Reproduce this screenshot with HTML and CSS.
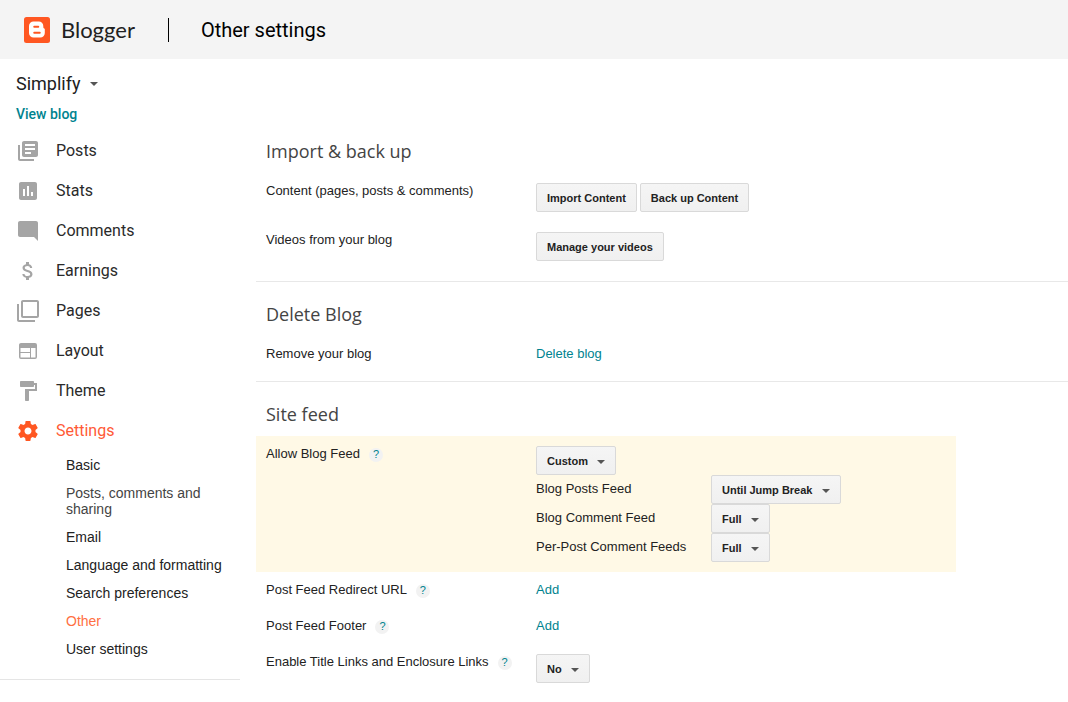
FILE: index.html
```html
<!DOCTYPE html>
<html lang="en">
<head>
<meta charset="utf-8">
<title>Blogger: Other settings</title>
<link rel="stylesheet" href="styles.css">
</head>
<body>
<header class="topbar">
  <a class="brand" href="#">
    <svg class="brand-mark" viewBox="0 0 26 26" aria-hidden="true">
      <rect width="26" height="26" rx="2.5" fill="#ff5722"/>
      <path fill="#fff" d="M9.500 4.500h5.300a4.500 4.500 0 0 1 4.500 4.500v1c0 .9.400 1.300.9 1.400.4.100.6.400.6.900v3.700a4.500 4.500 0 0 1-4.500 4.500H9.500A4.500 4.500 0 0 1 5 16V9a4.500 4.500 0 0 1 4.500-4.500z"/>
      <path d="M10.200 9.700h4.100M10.200 15.700h5.600" stroke="#ff5722" stroke-width="1.900" stroke-linecap="round"/>
    </svg>
    <span>Blogger</span>
  </a>
  <h1 class="page-title">Other settings</h1>
</header>
<div class="layout">
  <aside class="sidebar">
    <button class="blog-picker" type="button">Simplify<span class="caret"></span></button>
    <a class="view-blog" href="#">View blog</a>
    <nav>
      <ul class="nav">
        <li><a href="#"><svg viewBox="0 0 24 24"><path d="M4 6H2v14c0 1.100.9 2 2 2h14v-2H4V6zm16-4H8c-1.100 0-2 .9-2 2v12c0 1.100.9 2 2 2h12c1.100 0 2-.9 2-2V4c0-1.100-.9-2-2-2zm-1 9H9V9h10v2zm-4 4H9v-2h6v2zm4-8H9V5h10v2z"/></svg>Posts</a></li>
        <li><a href="#"><svg viewBox="0 0 24 24"><path d="M19 3H5c-1.100 0-2 .9-2 2v14c0 1.100.9 2 2 2h14c1.100 0 2-.9 2-2V5c0-1.100-.9-2-2-2zM9 17H7v-7h2v7zm4 0h-2V7h2v10zm4 0h-2v-4h2v4z"/></svg>Stats</a></li>
        <li><a href="#"><svg viewBox="0 0 24 24"><path d="M22 4c0-1.100-.9-2-2-2H4c-1.100 0-2 .9-2 2v12c0 1.100.9 2 2 2h14l4 4V4z"/></svg>Comments</a></li>
        <li><a href="#"><svg viewBox="0 0 24 24"><path d="M11.800 10.900c-2.270-.59-3-1.200-3-2.150 0-1.090 1.010-1.850 2.700-1.850 1.780 0 2.440.85 2.500 2.100h2.210c-.07-1.720-1.120-3.300-3.210-3.810V3h-3v2.160c-1.940.42-3.500 1.680-3.500 3.610 0 2.310 1.910 3.460 4.700 4.130 2.500.6 3 1.480 3 2.410 0 .69-.49 1.790-2.700 1.790-2.060 0-2.870-.92-2.980-2.100h-2.200c.12 2.190 1.760 3.420 3.680 3.830V21h3v-2.150c1.950-.37 3.500-1.500 3.500-3.550 0-2.840-2.430-3.810-4.700-4.400z"/></svg>Earnings</a></li>
        <li><a href="#"><svg viewBox="0 0 24 24"><path d="M3 5H1v16c0 1.100.9 2 2 2h16v-2H3V5zm18-4H7c-1.100 0-2 .9-2 2v14c0 1.100.9 2 2 2h14c1.100 0 2-.9 2-2V3c0-1.100-.9-2-2-2zm0 16H7V3h14v14z"/></svg>Pages</a></li>
        <li><a href="#"><svg viewBox="0 0 24 24"><path fill-rule="evenodd" d="M5 4h14a2 2 0 0 1 2 2v12a2 2 0 0 1-2 2H5a2 2 0 0 1-2-2V6c0-1.100.9-2 2-2zM4.500 9v4H14V9zM4.500 14v4.500H14V14zM15 9v9.500h4.500V9z"/></svg>Layout</a></li>
        <li><a href="#"><svg viewBox="0 0 24 24"><path d="M18 4V3c0-.55-.45-1-1-1H5c-.55 0-1 .45-1 1v4c0 .55.45 1 1 1h12c.55 0 1-.45 1-1V6h1v4H9v11c0 .55.45 1 1 1h2c.55 0 1-.45 1-1v-9h8V4h-3z"/></svg>Theme</a></li>
        <li><a class="active" href="#"><svg viewBox="0 0 24 24"><path d="M19.430 12.980c.04-.32.07-.64.07-.98s-.03-.66-.07-.98l2.110-1.650c.19-.15.24-.42.12-.64l-2-3.460c-.12-.22-.39-.3-.61-.22l-2.490 1c-.52-.4-1.080-.73-1.690-.98l-.38-2.650C14.460 2.180 14.250 2 14 2h-4c-.25 0-.46.18-.49.42l-.38 2.650c-.61.25-1.170.59-1.690.98l-2.490-1c-.23-.09-.49 0-.61.22l-2 3.460c-.13.22-.07.49.12.64l2.110 1.650c-.04.32-.07.65-.07.98s.03.66.07.98l-2.110 1.650c-.19.15-.24.42-.12.64l2 3.460c.12.22.39.3.61.22l2.490-1c.52.4 1.080.73 1.690.98l.38 2.650c.03.24.24.42.49.42h4c.25 0 .46-.18.49-.42l.38-2.650c.61-.25 1.170-.59 1.690-.98l2.490 1c.23.09.49 0 .61-.22l2-3.460c.12-.22.07-.49-.12-.64l-2.110-1.650zM12 15.500c-1.930 0-3.500-1.570-3.500-3.500s1.570-3.500 3.500-3.500 3.500 1.570 3.500 3.500-1.570 3.500-3.500 3.500z"/></svg>Settings</a></li>
      </ul>
      <ul class="subnav">
        <li><a href="#">Basic</a></li>
        <li><a class="muted" href="#">Posts, comments and sharing</a></li>
        <li><a href="#">Email</a></li>
        <li><a href="#">Language and formatting</a></li>
        <li><a href="#">Search preferences</a></li>
        <li><a class="active" href="#">Other</a></li>
        <li><a href="#">User settings</a></li>
      </ul>
    </nav>
  </aside>
  <main class="content">
    <section class="section">
      <h2>Import &amp; back up</h2>
      <div class="row">
        <div class="label">Content (pages, posts &amp; comments)</div>
        <div class="actions">
          <button class="button" type="button">Import Content</button>
          <button class="button" type="button">Back up Content</button>
        </div>
      </div>
      <div class="row">
        <div class="label">Videos from your blog</div>
        <div class="actions"><button class="button" type="button">Manage your videos</button></div>
      </div>
    </section>
    <section class="section">
      <h2>Delete Blog</h2>
      <div class="row">
        <div class="label">Remove your blog</div>
        <a class="link" href="#">Delete blog</a>
      </div>
    </section>
    <section class="section">
      <h2>Site feed</h2>
      <div class="row highlight">
        <div class="label"><label for="allow-feed">Allow Blog Feed</label><a class="help" href="#">?</a></div>
        <div class="feeds">
          <select class="button select" id="allow-feed"><option>Custom</option></select>
          <div class="feed">
            <label for="posts-feed">Blog Posts Feed</label>
            <select class="button select" id="posts-feed"><option>Until Jump Break</option></select>
          </div>
          <div class="feed">
            <label for="comment-feed">Blog Comment Feed</label>
            <select class="button select" id="comment-feed"><option>Full</option></select>
          </div>
          <div class="feed">
            <label for="per-post-feed">Per-Post Comment Feeds</label>
            <select class="button select" id="per-post-feed"><option>Full</option></select>
          </div>
        </div>
      </div>
      <div class="row">
        <div class="label">Post Feed Redirect URL<a class="help" href="#">?</a></div>
        <a class="link" href="#">Add</a>
      </div>
      <div class="row">
        <div class="label">Post Feed Footer<a class="help" href="#">?</a></div>
        <a class="link" href="#">Add</a>
      </div>
      <div class="row">
        <div class="label"><label for="title-links">Enable Title Links and Enclosure Links</label><a class="help" href="#">?</a></div>
        <select class="button select" id="title-links"><option>No</option></select>
      </div>
    </section>
  </main>
</div>
</body>
</html>
```
FILE: styles.css
```css
* { box-sizing: border-box; }

body {
  margin: 0;
  background: #fff;
  color: #222;
  font: 13px/15px "Liberation Sans", Arial, sans-serif;
}

a { color: #00838f; text-decoration: none; }
ul { margin: 0; padding: 0; list-style: none; }

.topbar {
  display: flex;
  align-items: center;
  height: 59px;
  padding-left: 24px;
  background: #f4f4f4;
}

.brand {
  display: flex;
  align-items: center;
  gap: 11px;
  color: #212121;
  font: 22px/26px Lato, sans-serif;
}

.brand-mark { width: 26px; height: 26px; }

.page-title {
  margin: 0 0 0 33px;
  padding-left: 32px;
  border-left: 1px solid #000;
  color: #000;
  font: 400 20px/24px Roboto, sans-serif;
}

.layout { display: flex; align-items: flex-start; gap: 16px; }

.sidebar {
  flex: 0 0 240px;
  padding: 12px 0 16px;
  border-bottom: 1px solid #e5e5e5;
}

.blog-picker {
  display: flex;
  align-items: center;
  gap: 9px;
  padding: 0 16px;
  border: 0;
  background: none;
  color: #212121;
  font: 18px/26px Roboto, sans-serif;
}

.caret {
  border: 4px solid transparent;
  border-top-color: #555;
  border-bottom: 0;
}

.view-blog {
  display: block;
  padding: 8px 16px;
  font: 500 14px/18px Roboto, sans-serif;
}

.nav a {
  display: flex;
  align-items: center;
  gap: 16px;
  height: 40px;
  padding-left: 16px;
  color: #2a2a2a;
  font: 16px/20px Roboto, sans-serif;
}

.nav svg { width: 24px; height: 24px; fill: #a5a5a5; }
.nav .active { color: #ff5a36; }
.nav .active svg { fill: #ff5722; }

.subnav a {
  display: block;
  padding: 6px 16px 6px 66px;
  color: #222;
  font-size: 14px;
  line-height: 16px;
}

.subnav .muted { color: #444; }
.subnav .active { color: #ff7043; }

.content { flex: 1; min-width: 0; padding-top: 60px; }

.section { padding: 20px 0 10px; }
.section + .section { border-top: 1px solid #e8e8e8; }

.section h2 {
  margin: 0 0 9px;
  padding-left: 10px;
  color: #444;
  font: 400 18px/25px "Open Sans", sans-serif;
}

.row {
  display: flex;
  align-items: flex-start;
  max-width: 700px;
  padding: 10px;
}

.highlight { background: #fff9e6; }
.label { display: flex; flex: 0 0 270px; min-height: 15px; }
.actions { display: flex; gap: 3px; }

.help {
  width: 14px;
  height: 14px;
  margin: 2px 0 0 9px;
  border-radius: 50%;
  background: #f2f2f2;
  font-size: 11px;
  line-height: 13px;
  text-align: center;
}

.button {
  height: 29px;
  margin: 0;
  padding: 2px 10px 0;
  border: 1px solid #d9d9d9;
  border-radius: 2px;
  background: linear-gradient(#f5f5f5, #f0f0f0);
  color: #222;
  font: bold 11px/25px "Liberation Sans", Arial, sans-serif;
}

.select {
  appearance: none;
  padding-right: 27px;
  background: url("data:image/svg+xml,%3Csvg xmlns='http://www.w3.org/2000/svg' width='8' height='4'%3E%3Cpath d='M0 0h8L4 4z' fill='%23555'/%3E%3C/svg%3E") no-repeat right 10px top 13px, linear-gradient(#f5f5f5, #f0f0f0);
}

.feed { display: flex; }
.feed label { width: 175px; padding-top: 6px; }
.feeds .select { display: block; }
```
